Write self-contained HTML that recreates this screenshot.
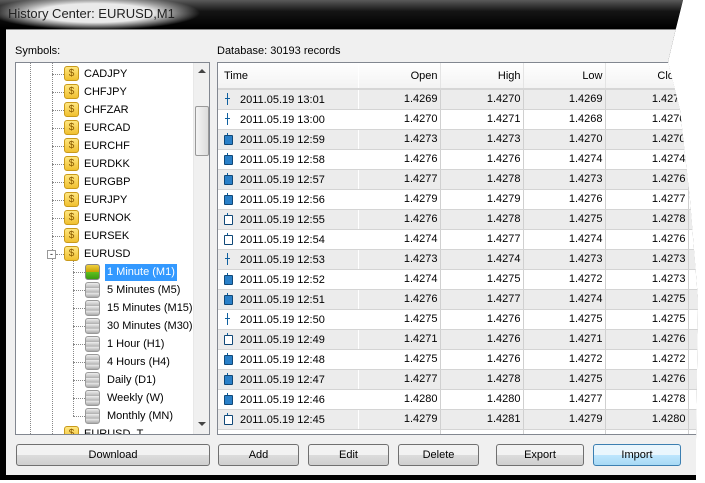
<!DOCTYPE html>
<html><head><meta charset="utf-8"><style>
*{box-sizing:border-box;margin:0;padding:0}
body{width:705px;height:483px;background:#fff;position:relative;overflow:hidden;font-family:"Liberation Sans",Tahoma,sans-serif;font-size:11px;color:#000}
#win{position:absolute;left:0;top:0;width:705px;height:483px;background:#000;clip-path:polygon(0 0,683px 0,676px 28px,668px 62px,680px 110px,690px 200px,698px 300px,696px 440px,696px 480px,0 480px)}
#title{position:absolute;left:8px;top:6px;font-size:13px;color:#222;}
#tb{position:absolute;left:0;top:0;width:700px;height:28px;background:linear-gradient(#5a5a5a,#151515 40%,#000);}
#tlabel{position:absolute;left:-10px;top:-4px;width:210px;height:34px;background:radial-gradient(ellipse 50% 50% at center,#eaeaea 55%,rgba(220,220,220,0.6) 75%,rgba(200,200,200,0) 100%)}
#client{position:absolute;left:6px;top:29px;width:700px;height:446px;background:#f0f0f0;border-top:1px solid #888}
.lbl{position:absolute;font-size:11px}
#tree{position:absolute;left:15px;top:62px;width:195px;height:373px;background:#fff;border:1px solid #828790;overflow:hidden}
#sb{position:absolute;left:177px;top:0;width:17px;height:371px;background:#f0f0f0;border-left:1px solid #e8e8e8}
#thumb{position:absolute;left:1px;top:43px;width:14px;height:50px;border:1px solid #999;border-radius:2px;background:linear-gradient(90deg,#f4f4f4,#dcdcdc)}
.ti{position:absolute;height:18px;line-height:18px;white-space:nowrap}
.coin{position:absolute;width:15px;height:15px;border:1px solid #c99a1a;border-radius:3px;background:linear-gradient(#ffe680,#f0c030);font-size:10px;line-height:13px;text-align:center;color:#8a5a00}
.db{position:absolute;width:15px;height:16px;border-radius:3px;background:linear-gradient(#eee,#bbb 30%,#999 33%,#eee 36%,#bbb 63%,#999 66%,#eee 69%,#aaa);border:1px solid #999}
.dot{position:absolute;border-left:1px dotted #888}
.doth{position:absolute;border-top:1px dotted #888;height:0}
#grid{position:absolute;left:217px;top:62px;width:500px;height:373px;background:#fff;border:1px solid #828790;overflow:hidden}
table{border-collapse:collapse;position:absolute;left:0;top:0;table-layout:fixed;width:510px}
td,th{height:20px;font-weight:normal;border-right:1px solid #d0d0d0;border-bottom:1px solid #d4d4d4;padding:0 2px;text-align:right;white-space:nowrap;overflow:hidden}
th{height:26px;background:linear-gradient(#fff,#f3f3f3);border-bottom:2px solid #d6d6d6;border-right:1px solid #e4e4e4}
td:first-child,th:first-child{border-right-color:transparent}
tr:nth-child(even) td{background:#ececec}
td.t{text-align:left;padding-left:6px}
.ic{display:inline-block;width:8px;height:12px;vertical-align:-2px;margin-right:8px;position:relative}
.ic:before{content:"";position:absolute;left:3px;top:0;width:1px;height:12px;background:#1060a0}
.f:after{content:"";position:absolute;left:0;top:2px;width:7px;height:8px;background:#2a80c8;border:1px solid #104878;border-radius:1px}
.h:after{content:"";position:absolute;left:0;top:2px;width:7px;height:8px;background:#fff;border:1px solid #104878;border-radius:1px}
.k:after{content:"";position:absolute;left:1px;top:5px;width:5px;height:1px;background:#1060a0}
.btn{position:absolute;top:444px;height:22px;border:1px solid #707070;border-radius:3px;background:linear-gradient(#f2f2f2 50%,#dcdcdc 50%,#cfcfcf);text-align:center;line-height:20px;font-size:11px}
.imp{border-color:#3c7fb1;background:linear-gradient(#eaf6fd 50%,#bee6fd 50%,#a7d9f5)}
</style></head><body>
<div id="win">
<div id="tb"></div><div id="tlabel"></div>
<div id="title">History Center: EURUSD,M1</div>
<div id="client"></div>
<div class="lbl" style="left:15px;top:45px">Symbols:</div>
<div class="lbl" style="left:217px;top:45px">Database: 30193 records</div>
<div id="tree">
<div class="dot" style="left:14px;top:0;height:373px"></div>
<div class="dot" style="left:36px;top:0;height:373px"></div>
<div class="dot" style="left:57px;top:198px;height:155px"></div>
<div class="ti" style="top:2px;left:36px"><span class="doth" style="left:0;top:9px;width:12px"></span><span class="coin" style="left:12px;top:1px">$</span><span style="position:absolute;left:32px">CADJPY</span></div>
<div class="ti" style="top:20px;left:36px"><span class="doth" style="left:0;top:9px;width:12px"></span><span class="coin" style="left:12px;top:1px">$</span><span style="position:absolute;left:32px">CHFJPY</span></div>
<div class="ti" style="top:38px;left:36px"><span class="doth" style="left:0;top:9px;width:12px"></span><span class="coin" style="left:12px;top:1px">$</span><span style="position:absolute;left:32px">CHFZAR</span></div>
<div class="ti" style="top:56px;left:36px"><span class="doth" style="left:0;top:9px;width:12px"></span><span class="coin" style="left:12px;top:1px">$</span><span style="position:absolute;left:32px">EURCAD</span></div>
<div class="ti" style="top:74px;left:36px"><span class="doth" style="left:0;top:9px;width:12px"></span><span class="coin" style="left:12px;top:1px">$</span><span style="position:absolute;left:32px">EURCHF</span></div>
<div class="ti" style="top:92px;left:36px"><span class="doth" style="left:0;top:9px;width:12px"></span><span class="coin" style="left:12px;top:1px">$</span><span style="position:absolute;left:32px">EURDKK</span></div>
<div class="ti" style="top:110px;left:36px"><span class="doth" style="left:0;top:9px;width:12px"></span><span class="coin" style="left:12px;top:1px">$</span><span style="position:absolute;left:32px">EURGBP</span></div>
<div class="ti" style="top:128px;left:36px"><span class="doth" style="left:0;top:9px;width:12px"></span><span class="coin" style="left:12px;top:1px">$</span><span style="position:absolute;left:32px">EURJPY</span></div>
<div class="ti" style="top:146px;left:36px"><span class="doth" style="left:0;top:9px;width:12px"></span><span class="coin" style="left:12px;top:1px">$</span><span style="position:absolute;left:32px">EURNOK</span></div>
<div class="ti" style="top:164px;left:36px"><span class="doth" style="left:0;top:9px;width:12px"></span><span class="coin" style="left:12px;top:1px">$</span><span style="position:absolute;left:32px">EURSEK</span></div>
<div class="ti" style="top:182px;left:36px"><span style="position:absolute;left:-5px;top:5px;width:9px;height:9px;border:1px solid #999;background:#fff;font-size:9px;line-height:6px;text-align:center">-</span><span class="doth" style="left:4px;top:9px;width:8px"></span><span class="coin" style="left:12px;top:1px">$</span><span style="position:absolute;left:32px">EURUSD</span></div>
<div class="ti" style="top:200px;left:57px"><span class="doth" style="left:0;top:9px;width:12px"></span><span class="db" style="left:12px;top:1px;background:linear-gradient(#f0d040,#c8a000 50%,#60c020 50%,#3a9a10);border-color:#888"></span><span style="position:absolute;left:32px;top:1px;height:17px;line-height:16px;background:#3399ff;color:#fff;padding:0 2px">1 Minute (M1)</span></div>
<div class="ti" style="top:218px;left:57px"><span class="doth" style="left:0;top:9px;width:12px"></span><span class="db" style="left:12px;top:1px"></span><span style="position:absolute;left:34px">5 Minutes (M5)</span></div>
<div class="ti" style="top:236px;left:57px"><span class="doth" style="left:0;top:9px;width:12px"></span><span class="db" style="left:12px;top:1px"></span><span style="position:absolute;left:34px">15 Minutes (M15)</span></div>
<div class="ti" style="top:254px;left:57px"><span class="doth" style="left:0;top:9px;width:12px"></span><span class="db" style="left:12px;top:1px"></span><span style="position:absolute;left:34px">30 Minutes (M30)</span></div>
<div class="ti" style="top:272px;left:57px"><span class="doth" style="left:0;top:9px;width:12px"></span><span class="db" style="left:12px;top:1px"></span><span style="position:absolute;left:34px">1 Hour (H1)</span></div>
<div class="ti" style="top:290px;left:57px"><span class="doth" style="left:0;top:9px;width:12px"></span><span class="db" style="left:12px;top:1px"></span><span style="position:absolute;left:34px">4 Hours (H4)</span></div>
<div class="ti" style="top:308px;left:57px"><span class="doth" style="left:0;top:9px;width:12px"></span><span class="db" style="left:12px;top:1px"></span><span style="position:absolute;left:34px">Daily (D1)</span></div>
<div class="ti" style="top:326px;left:57px"><span class="doth" style="left:0;top:9px;width:12px"></span><span class="db" style="left:12px;top:1px"></span><span style="position:absolute;left:34px">Weekly (W)</span></div>
<div class="ti" style="top:344px;left:57px"><span class="doth" style="left:0;top:9px;width:12px"></span><span class="db" style="left:12px;top:1px"></span><span style="position:absolute;left:34px">Monthly (MN)</span></div>
<div class="ti" style="top:362px;left:36px"><span class="doth" style="left:0;top:9px;width:12px"></span><span class="coin" style="left:12px;top:1px">$</span><span style="position:absolute;left:32px">EURUSD_T</span></div>
<div id="sb"><div style="position:absolute;left:4px;top:6px;border:4px solid transparent;border-bottom:4px solid #444;border-top:0"></div><div id="thumb"></div><div style="position:absolute;left:4px;top:359px;border:4px solid transparent;border-top:4px solid #444;border-bottom:0"></div></div>
</div>
<div id="grid"><table>
<colgroup><col style="width:140px"><col style="width:82px"><col style="width:83px"><col style="width:82px"><col style="width:83px"><col style="width:40px"></colgroup>
<tr><th style="text-align:left;padding-left:6px">Time</th><th>Open</th><th>High</th><th>Low</th><th>Close</th><th></th></tr>
<tr><td class="t"><i class="ic k"></i>2011.05.19 13:01</td><td>1.4269</td><td>1.4270</td><td>1.4269</td><td>1.4270</td><td></td></tr>
<tr><td class="t"><i class="ic k"></i>2011.05.19 13:00</td><td>1.4270</td><td>1.4271</td><td>1.4268</td><td>1.4270</td><td></td></tr>
<tr><td class="t"><i class="ic f"></i>2011.05.19 12:59</td><td>1.4273</td><td>1.4273</td><td>1.4270</td><td>1.4270</td><td></td></tr>
<tr><td class="t"><i class="ic f"></i>2011.05.19 12:58</td><td>1.4276</td><td>1.4276</td><td>1.4274</td><td>1.4274</td><td></td></tr>
<tr><td class="t"><i class="ic f"></i>2011.05.19 12:57</td><td>1.4277</td><td>1.4278</td><td>1.4273</td><td>1.4276</td><td></td></tr>
<tr><td class="t"><i class="ic f"></i>2011.05.19 12:56</td><td>1.4279</td><td>1.4279</td><td>1.4276</td><td>1.4277</td><td></td></tr>
<tr><td class="t"><i class="ic h"></i>2011.05.19 12:55</td><td>1.4276</td><td>1.4278</td><td>1.4275</td><td>1.4278</td><td></td></tr>
<tr><td class="t"><i class="ic h"></i>2011.05.19 12:54</td><td>1.4274</td><td>1.4277</td><td>1.4274</td><td>1.4276</td><td></td></tr>
<tr><td class="t"><i class="ic k"></i>2011.05.19 12:53</td><td>1.4273</td><td>1.4274</td><td>1.4273</td><td>1.4273</td><td></td></tr>
<tr><td class="t"><i class="ic f"></i>2011.05.19 12:52</td><td>1.4274</td><td>1.4275</td><td>1.4272</td><td>1.4273</td><td></td></tr>
<tr><td class="t"><i class="ic f"></i>2011.05.19 12:51</td><td>1.4276</td><td>1.4277</td><td>1.4274</td><td>1.4275</td><td></td></tr>
<tr><td class="t"><i class="ic k"></i>2011.05.19 12:50</td><td>1.4275</td><td>1.4276</td><td>1.4275</td><td>1.4275</td><td></td></tr>
<tr><td class="t"><i class="ic h"></i>2011.05.19 12:49</td><td>1.4271</td><td>1.4276</td><td>1.4271</td><td>1.4276</td><td></td></tr>
<tr><td class="t"><i class="ic f"></i>2011.05.19 12:48</td><td>1.4275</td><td>1.4276</td><td>1.4272</td><td>1.4272</td><td></td></tr>
<tr><td class="t"><i class="ic f"></i>2011.05.19 12:47</td><td>1.4277</td><td>1.4278</td><td>1.4275</td><td>1.4276</td><td></td></tr>
<tr><td class="t"><i class="ic f"></i>2011.05.19 12:46</td><td>1.4280</td><td>1.4280</td><td>1.4277</td><td>1.4278</td><td></td></tr>
<tr><td class="t"><i class="ic h"></i>2011.05.19 12:45</td><td>1.4279</td><td>1.4281</td><td>1.4279</td><td>1.4280</td><td></td></tr>
<tr><td class="t"></td><td></td><td></td><td></td><td></td><td></td></tr>
</table></div>
<div class="btn" style="left:16px;width:194px">Download</div>
<div class="btn" style="left:218px;width:81px">Add</div>
<div class="btn" style="left:308px;width:81px">Edit</div>
<div class="btn" style="left:398px;width:81px">Delete</div>
<div class="btn" style="left:496px;width:88px">Export</div>
<div class="btn imp" style="left:593px;width:88px">Import</div>
</div>
</body></html>
